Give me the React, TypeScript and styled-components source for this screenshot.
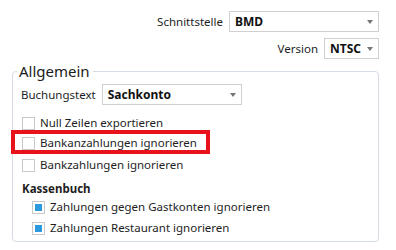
import React from 'react';
import styled, { createGlobalStyle } from 'styled-components';

const GlobalStyle = createGlobalStyle`
  html, body {
    margin: 0;
    padding: 0;
    background: #ffffff;
  }
  body {
    font-family: 'Noto Sans', 'Open Sans', sans-serif;
    font-size: 11.5px;
    color: #1e1e1e;
  }
`;

const Page = styled.div`
  width: 396px;
  height: 250px;
  overflow: hidden;
  padding-top: 11px;
  box-sizing: border-box;
`;

const TopRows = styled.div`
  display: flex;
  flex-direction: column;
  align-items: flex-end;
  gap: 6px;
  padding-right: 17px;
`;

const FieldRow = styled.div`
  display: flex;
  align-items: center;
  gap: 6px;
`;

const Label = styled.span`
  font-size: 11.5px;
  line-height: 16px;
`;

const Combo = styled.div<{ $width: number }>`
  width: ${p => p.$width}px;
  height: 21px;
  box-sizing: border-box;
  border: 1px solid #d0d0d0;
  background: #ffffff;
  display: flex;
  align-items: center;
  justify-content: space-between;
  padding: 0 5px 0 5px;
  font-weight: 700;
  font-size: 12px;
  color: #111111;
`;

const Arrow = styled.span`
  width: 0;
  height: 0;
  border-left: 3.5px solid transparent;
  border-right: 3.5px solid transparent;
  border-top: 4px solid #757575;
  margin-top: 1px;
`;

const Group = styled.fieldset`
  margin: 2px 17px 0 12px;
  padding: 0 0 7px 4px;
  border: 1px solid #d6dce4;
  border-radius: 4px;
  height: 181px;
  box-sizing: border-box;
`;

const Legend = styled.legend`
  padding: 0 3px 0 2px;
  font-size: 15px;
  line-height: 20px;
  color: #1b1b1b;
`;

const GroupBody = styled.div`
  display: flex;
  flex-direction: column;
  padding-left: 4px;
  padding-top: 3px;
`;

const CheckRow = styled.div<{ $mt?: number; $indent?: number }>`
  position: relative;
  display: flex;
  align-items: center;
  gap: 5px;
  height: 20px;
  margin-top: ${p => p.$mt ?? 0}px;
  padding-left: ${p => (p.$indent ?? 0) + 1}px;
`;

const Box = styled.span<{ $checked?: boolean }>`
  width: 13px;
  height: 13px;
  box-sizing: border-box;
  border: 1px solid #c9c9c9;
  background: #ffffff;
  display: flex;
  align-items: center;
  justify-content: center;
  &::after {
    content: '';
    display: ${p => (p.$checked ? 'block' : 'none')};
    width: 7px;
    height: 7px;
    background: #2d9ae0;
  }
`;

const Highlight = styled.span`
  position: absolute;
  left: -10px;
  top: -3px;
  width: 199px;
  height: 24px;
  box-sizing: border-box;
  border: 4px solid #e8121c;
  pointer-events: none;
`;

const Heading = styled.div`
  font-weight: 700;
  font-size: 11.5px;
  line-height: 16px;
  margin-top: 6px;
  padding-left: 1px;
`;

export default function App() {
  return (
    <>
      <GlobalStyle />
      <Page>
        <TopRows>
          <FieldRow>
            <Label>Schnittstelle</Label>
            <Combo $width={150}>
              BMD
              <Arrow />
            </Combo>
          </FieldRow>
          <FieldRow>
            <Label>Version</Label>
            <Combo $width={55}>
              NTSC
              <Arrow />
            </Combo>
          </FieldRow>
        </TopRows>

        <Group>
          <Legend>Allgemein</Legend>
          <GroupBody>
            <FieldRow>
              <Label>Buchungstext</Label>
              <Combo $width={140}>
                Sachkonto
                <Arrow />
              </Combo>
            </FieldRow>
            <CheckRow $mt={8}>
              <Box />
              <Label>Null Zeilen exportieren</Label>
            </CheckRow>
            <CheckRow>
              <Box />
              <Label>Bankanzahlungen ignorieren</Label>
              <Highlight />
            </CheckRow>
            <CheckRow $mt={2}>
              <Box />
              <Label>Bankzahlungen ignorieren</Label>
            </CheckRow>
            <Heading>Kassenbuch</Heading>
            <CheckRow $indent={10}>
              <Box $checked />
              <Label>Zahlungen gegen Gastkonten ignorieren</Label>
            </CheckRow>
            <CheckRow $indent={10} $mt={1}>
              <Box $checked />
              <Label>Zahlungen Restaurant ignorieren</Label>
            </CheckRow>
          </GroupBody>
        </Group>
      </Page>
    </>
  );
}
